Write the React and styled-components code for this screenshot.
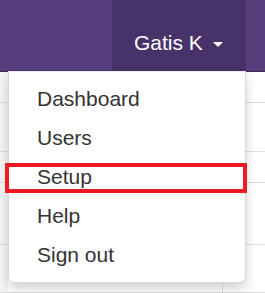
import * as React from "react";
import styled, { createGlobalStyle } from "styled-components";

const items = ["Dashboard", "Users", "Setup", "Help", "Sign out"];
const rows = [31, 49, 31, 62, 48];

export default function App() {
    return <Page>
        <GlobalStyle />
        <Navbar>
            <UserNav>
                <UserToggle>
                    Gatis K<Caret />
                </UserToggle>
                <Menu>
                    {items.map((v) => <MenuItem key={v}>
                        {v}
                        {v === "Setup" && <Highlight />}
                    </MenuItem>)}
                </Menu>
            </UserNav>
        </Navbar>
        <Content>
            {rows.map((h, i) => <Row key={i} style={{ height: h }}>
                <Cell />
                <Cell />
            </Row>)}
        </Content>
    </Page>
}

const GlobalStyle = createGlobalStyle`
html, body {
    margin: 0;
    padding: 0;
    background: #ffffff;
}
body {
    font-family: "Liberation Sans", Arial, sans-serif;
    overflow: hidden;
}
`

const Page = styled.div`
width: 265px;
height: 293px;
position: relative;
overflow: hidden;
`

const Navbar = styled.div`
height: 71px;
background: #563d7c;
border-bottom: 1px solid #3f2b5c;
display: flex;
justify-content: flex-end;
padding-right: 19px;
`

const UserNav = styled.div`
position: relative;
width: 134px;
height: 100%;
background: #47336a;
`

const UserToggle = styled.div`
display: flex;
align-items: center;
padding: 28px 0 0 22px;
height: 30px;
line-height: 30px;
font-size: 21px;
color: #ffffff;
white-space: pre;
`

const Caret = styled.span`
display: inline-block;
margin-left: 10px;
margin-top: 2px;
width: 0;
height: 0;
border-top: 5px solid #ffffff;
border-left: 5px solid transparent;
border-right: 5px solid transparent;
`

const Menu = styled.div`
position: absolute;
top: 71px;
right: 0;
width: 236px;
padding: 7px 0 8px;
background: #ffffff;
border: 1px solid rgba(0, 0, 0, 0.15);
border-top: 1px solid rgba(0, 0, 0, 0.08);
border-radius: 0 0 6px 6px;
box-shadow: 0 6px 12px rgba(0, 0, 0, 0.175);
z-index: 2;
`

const MenuItem = styled.div`
position: relative;
padding: 4.5px 28px;
line-height: 30px;
font-size: 21px;
color: #333333;
`

const Highlight = styled.div`
position: absolute;
left: -4px;
right: -2px;
top: 6px;
bottom: 3px;
border: 4.5px solid #ed1c24;
`

const Content = styled.div`
display: flex;
flex-direction: column;
background: linear-gradient(90deg, #f4f4f4 0, #f4f4f4 8px, #ffffff 8px);
`

const Row = styled.div`
display: grid;
grid-template-columns: 223px 1fr;
border-bottom: 1px solid #dddddd;
box-sizing: border-box;
`

const Cell = styled.div`
border-right: 1px solid #e2e2e2;
&:last-child {
    border-right: none;
}
`
